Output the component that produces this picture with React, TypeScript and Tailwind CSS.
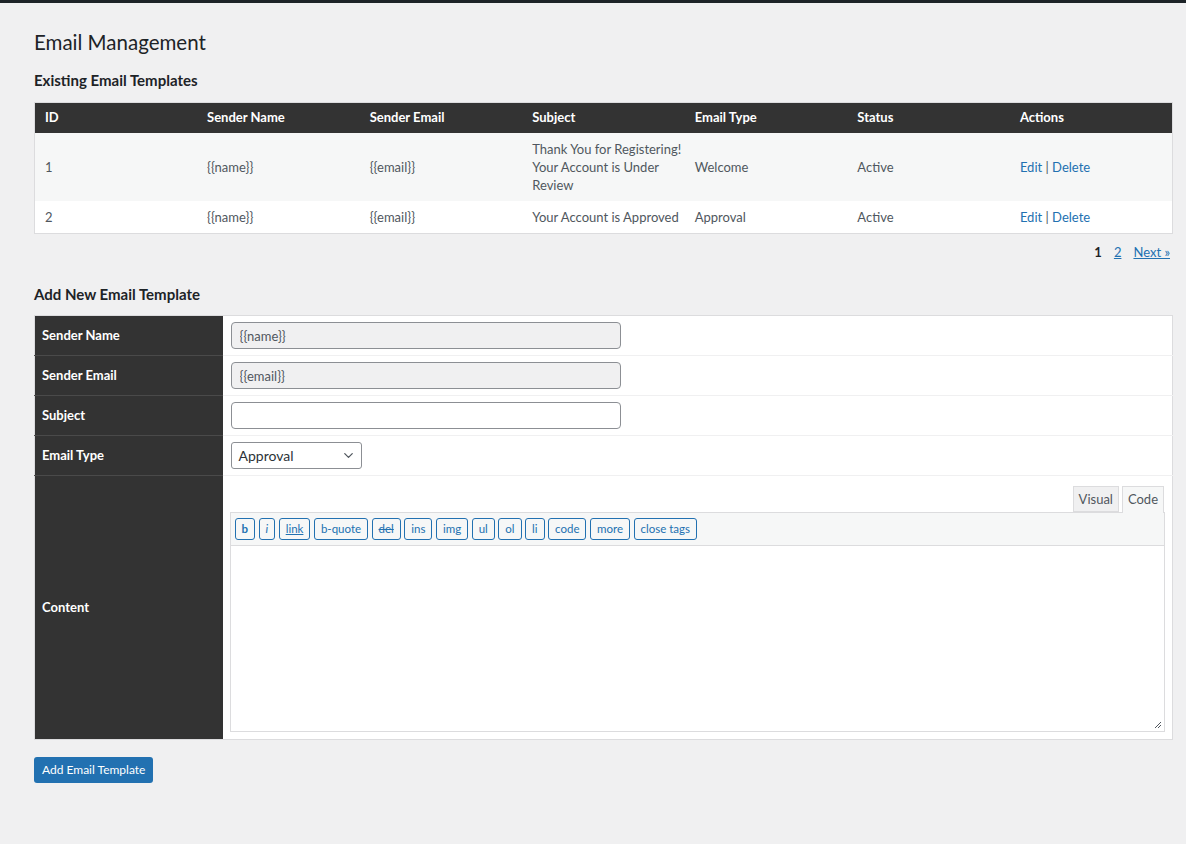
import { ChevronDown } from "lucide-react"

const templates = [
  { id: 1, name: "{{name}}", email: "{{email}}", subject: "Thank You for Registering! Your Account is Under Review", type: "Welcome", status: "Active" },
  { id: 2, name: "{{name}}", email: "{{email}}", subject: "Your Account is Approved", type: "Approval", status: "Active" },
]

const quicktags = ["b", "i", "link", "b-quote", "del", "ins", "img", "ul", "ol", "li", "code", "more", "close tags"]

const headings = ["ID", "Sender Name", "Sender Email", "Subject", "Email Type", "Status", "Actions"]

const tagClass = (tag: string) => {
  if (tag === "b") return "font-bold"
  if (tag === "i") return "italic"
  if (tag === "link") return "underline"
  if (tag === "del") return "line-through"
  return ""
}

const FormRow = ({ label, children }: { label: string; children: React.ReactNode }) => (
  <tr className="border-b border-[#f0f0f1]">
    <th className="h-[40px] w-[188px] border-b border-[#4a4a4a] bg-[#333333] px-[7px] text-left align-middle text-[13px] font-bold text-white">
      {label}
    </th>
    <td className="px-2 py-[6px] align-middle">{children}</td>
  </tr>
)

const EmailManagement = () => {
  return (
    <div className="min-h-[844px] border-t-[3px] border-[#1d2327] bg-[#f0f0f1] font-['Lato',sans-serif] text-[13px] text-[#50575e]">
      <div className="pl-[34px] pr-[13px] pt-[25px]">
        <h1 className="text-[20.5px] leading-[29px] text-[#1d2327]">Email Management</h1>

        {/* Existing templates */}
        <h2 className="mt-[12px] text-[15px] font-bold text-[#1d2327]">Existing Email Templates</h2>
        <table className="mt-[10px] w-full table-fixed border border-[#dcdcde] bg-white">
          <thead>
            <tr className="h-[31px] bg-[#333333]">
              {headings.map((h) => (
                <th key={h} className="pl-[10px] text-left text-[13px] font-bold text-white">{h}</th>
              ))}
            </tr>
          </thead>
          <tbody>
            {templates.map((t, i) => (
              <tr key={t.id} className={i % 2 === 0 ? "bg-[#f6f7f7]" : "bg-white"}>
                <td className="py-[7px] pl-[10px] pr-[3px] leading-[18px]">{t.id}</td>
                <td className="py-[7px] pl-[10px] pr-[3px] leading-[18px]">{t.name}</td>
                <td className="py-[7px] pl-[10px] pr-[3px] leading-[18px]">{t.email}</td>
                <td className="py-[7px] pl-[10px] pr-[3px] leading-[18px]">{t.subject}</td>
                <td className="py-[7px] pl-[10px] pr-[3px] leading-[18px]">{t.type}</td>
                <td className="py-[7px] pl-[10px] pr-[3px] leading-[18px]">{t.status}</td>
                <td className="py-[7px] pl-[10px] pr-[3px] leading-[18px]">
                  <a href="#" className="text-[#2271b1]">Edit</a> | <a href="#" className="text-[#2271b1]">Delete</a>
                </td>
              </tr>
            ))}
          </tbody>
        </table>

        {/* Pagination */}
        <div className="mt-[9px] flex justify-end gap-[12px] pr-[3px] text-[13px]">
          <span className="font-bold text-[#1d2327]">1</span>
          <a href="#" className="text-[#2271b1] underline">2</a>
          <a href="#" className="text-[#2271b1] underline">Next »</a>
        </div>

        {/* New template form */}
        <h2 className="mt-[20px] text-[15px] font-bold text-[#1d2327]">Add New Email Template</h2>
        <table className="mt-[10px] w-full border border-[#dcdcde] bg-white">
          <tbody>
            <FormRow label="Sender Name">
              <input readOnly value="{{name}}" className="h-[27px] w-[390px] rounded-[4px] border border-[#8c8f94] bg-[#f0f0f1] px-2 text-[13px] text-[#50575e]" />
            </FormRow>
            <FormRow label="Sender Email">
              <input readOnly value="{{email}}" className="h-[27px] w-[390px] rounded-[4px] border border-[#8c8f94] bg-[#f0f0f1] px-2 text-[13px] text-[#50575e]" />
            </FormRow>
            <FormRow label="Subject">
              <input className="h-[27px] w-[390px] rounded-[4px] border border-[#8c8f94] bg-white px-2 text-[13px]" />
            </FormRow>
            <FormRow label="Email Type">
              <div className="flex h-[27px] w-[131px] items-center justify-between rounded-[3px] border border-[#8c8f94] bg-white pl-[7px] pr-[5px] text-[14px] text-[#2c3338]">
                Approval
                <ChevronDown size={15} strokeWidth={2} className="text-[#50575e]" />
              </div>
            </FormRow>
            <tr>
              <th className="w-[188px] bg-[#333333] px-[7px] text-left align-middle text-[13px] font-bold text-white">Content</th>
              <td className="px-[7px] pb-[7px] pt-[10px]">
                <div className="flex justify-end gap-[3px] pr-[1px]">
                  <span className="h-[26px] border border-[#dcdcde] bg-[#f0f0f1] px-[5px] leading-[24px] text-[#50575e]">Visual</span>
                  <span className="-mb-px h-[27px] border border-b-0 border-[#dcdcde] bg-[#f6f7f7] px-[5px] leading-[24px] text-[#50575e]">Code</span>
                </div>
                <div className="border border-[#dcdcde] bg-[#f6f7f7]">
                  <div className="flex flex-wrap gap-[3.5px] px-[4px] py-[5px]">
                    {quicktags.map((tag) => (
                      <button
                        key={tag}
                        className={`h-[22px] rounded-[3px] border border-[#2271b1] bg-[#f6f7f7] px-[6px] text-[11.5px] leading-[20px] text-[#2271b1] ${tagClass(tag)}`}
                      >
                        {tag}
                      </button>
                    ))}
                  </div>
                  <div className="relative h-[186px] border-t border-[#dcdcde] bg-white">
                    <svg className="absolute bottom-[2px] right-[2px]" width="8" height="8" viewBox="0 0 8 8">
                      <path d="M7 1 L1 7 M7 4 L4 7" stroke="#50575e" strokeWidth="1" />
                    </svg>
                  </div>
                </div>
              </td>
            </tr>
          </tbody>
        </table>

        <button className="mt-[17px] h-[26px] rounded-[3px] bg-[#2271b1] px-[8px] text-[12px] text-white">
          Add Email Template
        </button>
      </div>
    </div>
  )
}

export default function App() {
  return <EmailManagement />
}
